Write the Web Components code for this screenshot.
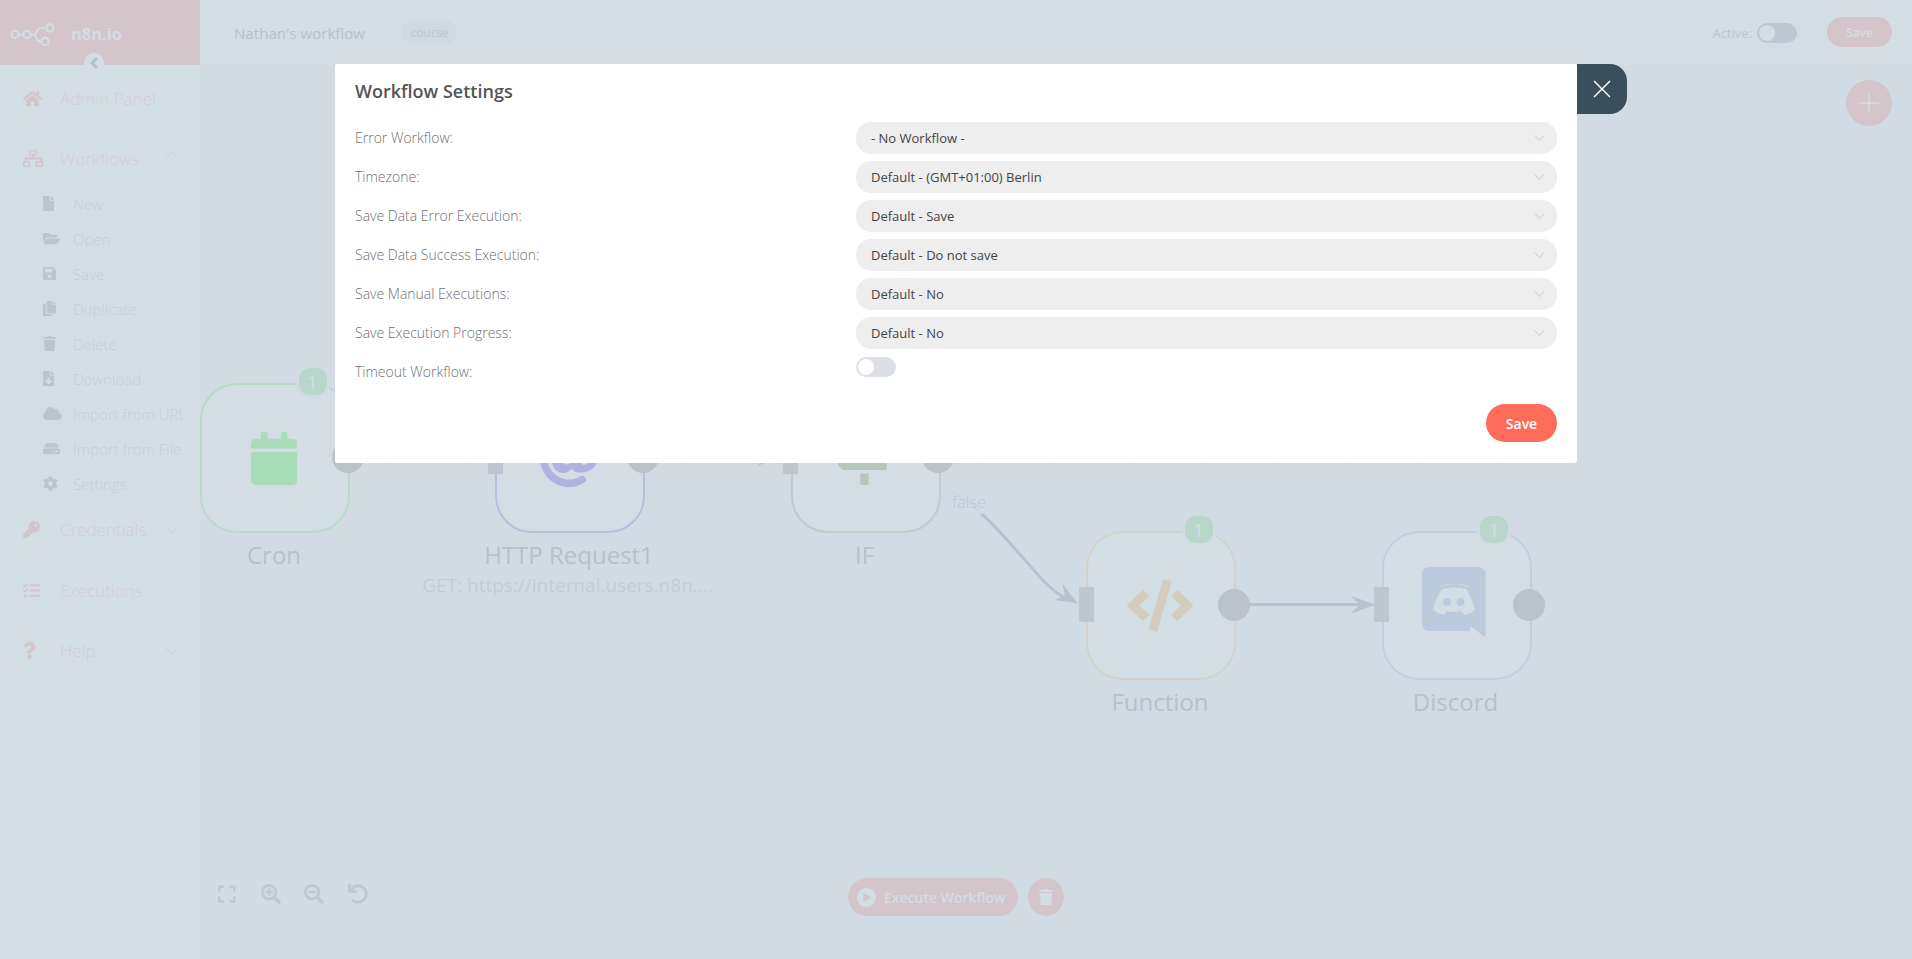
<!DOCTYPE html>
<html lang="en">
<head>
<meta charset="utf-8">
<title>n8n.io - Workflow Settings</title>
<style>
  html, body { margin: 0; height: 100%; overflow: hidden; }
  body { font-family: "Open Sans", "Liberation Sans", sans-serif; background: #fff; }
</style>
</head>
<body>
<n8n-app>
  <n8n-sidebar slot="sidebar">
    <n8n-menu-item icon="home" label="Admin Panel"></n8n-menu-item>
    <n8n-menu-item icon="sitemap" label="Workflows" chevron="up"></n8n-menu-item>
    <n8n-sub-menu>
      <n8n-menu-item sub icon="file" label="New"></n8n-menu-item>
      <n8n-menu-item sub icon="folder-open" label="Open"></n8n-menu-item>
      <n8n-menu-item sub icon="save" label="Save"></n8n-menu-item>
      <n8n-menu-item sub icon="copy" label="Duplicate"></n8n-menu-item>
      <n8n-menu-item sub icon="trash" label="Delete"></n8n-menu-item>
      <n8n-menu-item sub icon="file-download" label="Download"></n8n-menu-item>
      <n8n-menu-item sub icon="cloud" label="Import from URL"></n8n-menu-item>
      <n8n-menu-item sub icon="hdd" label="Import from File"></n8n-menu-item>
      <n8n-menu-item sub icon="cog" label="Settings"></n8n-menu-item>
    </n8n-sub-menu>
    <n8n-menu-item icon="key" label="Credentials" chevron="down"></n8n-menu-item>
    <n8n-menu-item icon="tasks" label="Executions"></n8n-menu-item>
    <n8n-menu-item icon="question" label="Help" chevron="down"></n8n-menu-item>
  </n8n-sidebar>
  <n8n-topbar slot="topbar" name="Nathan's workflow" tag="course"></n8n-topbar>
  <n8n-canvas slot="canvas">
    <n8n-node x="0" y="318" h="150" label="Cron" color="#00ff00" badge="1" icon="calendar" icon-size="53"></n8n-node>
    <n8n-node x="295" y="318" h="150" label="HTTP Request1" sub="GET: https://internal.users.n8n...." color="#2200dd" icon="at" icon-size="60" input></n8n-node>
    <n8n-node x="590.5" y="318" h="150" label="IF" color="#408000" icon="map-signs" icon-size="53" input></n8n-node>
    <n8n-node x="886" y="466" h="149" label="Function" color="#ff9922" badge="1" icon="code" icon-size="53" input></n8n-node>
    <n8n-node x="1181.5" y="466" h="149" label="Discord" color="#7289da" badge="1" icon="discord" input></n8n-node>
  </n8n-canvas>
  <n8n-settings-dialog slot="overlay" heading="Workflow Settings">
    <n8n-select-row label="Error Workflow:" value="- No Workflow -"></n8n-select-row>
    <n8n-select-row label="Timezone:" value="Default - (GMT+01:00) Berlin"></n8n-select-row>
    <n8n-select-row label="Save Data Error Execution:" value="Default - Save"></n8n-select-row>
    <n8n-select-row label="Save Data Success Execution:" value="Default - Do not save"></n8n-select-row>
    <n8n-select-row label="Save Manual Executions:" value="Default - No"></n8n-select-row>
    <n8n-select-row label="Save Execution Progress:" value="Default - No"></n8n-select-row>
    <n8n-select-row label="Timeout Workflow:" toggle></n8n-select-row>
  </n8n-settings-dialog>
</n8n-app>

<script>
// FontAwesome 5 solid shapes, [width, path] on a 512 high box
const ICONS = {
  home: [576, 'M280.37 148.26L96 300.11V464a16 16 0 0 0 16 16l112.06-.29a16 16 0 0 0 15.92-16V368a16 16 0 0 1 16-16h64a16 16 0 0 1 16 16v95.64a16 16 0 0 0 16 16.05L464 480a16 16 0 0 0 16-16V300L295.67 148.26a12.19 12.19 0 0 0-15.3 0zM571.6 251.47L488 182.56V44.05a12 12 0 0 0-12-12h-56a12 12 0 0 0-12 12v72.61L318.47 43a48 48 0 0 0-61 0L4.34 251.47a12 12 0 0 0-1.6 16.9l25.5 31A12 12 0 0 0 45.15 301l235.22-193.74a12.19 12.19 0 0 1 15.3 0L530.9 301a12 12 0 0 0 16.9-1.6l25.5-31a12 12 0 0 0-1.7-16.93z'],
  sitemap: [600, 'M210 0h180a24 24 0 0 1 24 24v116a24 24 0 0 1-24 24h-60v64h210a40 40 0 0 1 40 40v64h20a24 24 0 0 1 24 24v132a24 24 0 0 1-24 24H400a24 24 0 0 1-24-24V356a24 24 0 0 1 24-24h116v-48H84v48h116a24 24 0 0 1 24 24v132a24 24 0 0 1-24 24H24a24 24 0 0 1-24-24V356a24 24 0 0 1 24-24h16v-64a40 40 0 0 1 40-40h190v-64h-60a24 24 0 0 1-24-24V24a24 24 0 0 1 24-24zm18 40v84h144V40zM48 376v92h128v-92zm376 0v92h128v-92z'],
  file: [384, 'M224 136V0H24C10.7 0 0 10.7 0 24v464c0 13.3 10.7 24 24 24h336c13.3 0 24-10.7 24-24V160H248c-13.2 0-24-10.8-24-24zm160-14.1v6.1H256V0h6.1c6.4 0 12.5 2.5 17 7l97.9 98c4.5 4.5 7 10.6 7 16.9z'],
  'folder-open': [576, 'M572.694 292.093L500.27 416.248A63.997 63.997 0 0 1 444.989 448H45.025c-18.523 0-30.064-20.093-20.731-36.093l72.424-124.155A64 64 0 0 1 152 256h399.964c18.523 0 30.064 20.093 20.73 36.093zM152 224h328v-48c0-26.51-21.49-48-48-48H272l-64-64H48C21.49 64 0 85.49 0 112v278.046l69.077-118.418C86.214 242.25 117.989 224 152 224z'],
  save: [448, 'M433.941 129.941l-83.882-83.882A48 48 0 0 0 316.118 32H48C21.49 32 0 53.49 0 80v352c0 26.51 21.49 48 48 48h352c26.51 0 48-21.49 48-48V163.882a48 48 0 0 0-14.059-33.941zM224 416c-35.346 0-64-28.654-64-64 0-35.346 28.654-64 64-64s64 28.654 64 64c0 35.346-28.654 64-64 64zm96-304.52V212c0 6.627-5.373 12-12 12H76c-6.627 0-12-5.373-12-12V108c0-6.627 5.373-12 12-12h228.52c3.183 0 6.235 1.264 8.485 3.515l3.48 3.48A11.996 11.996 0 0 1 320 111.48z'],
  copy: [448, 'M320 448v40c0 13.255-10.745 24-24 24H24c-13.255 0-24-10.745-24-24V120c0-13.255 10.745-24 24-24h72v296c0 30.879 25.121 56 56 56h168zm0-344V0H152c-13.255 0-24 10.745-24 24v368c0 13.255 10.745 24 24 24h272c13.255 0 24-10.745 24-24V128H344c-13.2 0-24-10.8-24-24zm120.971-31.029L375.029 7.029A24 24 0 0 0 358.059 0H352v96h96v-6.059a24 24 0 0 0-7.029-16.97z'],
  trash: [448, 'M432 32H312l-9.4-18.7A24 24 0 0 0 281.1 0H166.8a23.72 23.72 0 0 0-21.4 13.3L136 32H16A16 16 0 0 0 0 48v32a16 16 0 0 0 16 16h416a16 16 0 0 0 16-16V48a16 16 0 0 0-16-16zM53.2 467a48 48 0 0 0 47.9 45h245.8a48 48 0 0 0 47.9-45L416 128H32z'],
  'file-download': [384, 'M224 136V0H24C10.7 0 0 10.7 0 24v464c0 13.3 10.7 24 24 24h336c13.3 0 24-10.7 24-24V160H248c-13.2 0-24-10.8-24-24zm76.45 211.36l-96.42 95.7c-6.65 6.61-17.39 6.61-24.04 0l-96.42-95.7C73.42 337.29 80.54 320 94.82 320H160v-80c0-8.84 7.16-16 16-16h32c8.84 0 16 7.16 16 16v80h65.18c14.28 0 21.4 17.29 11.27 27.36zM377 105L279.1 7c-4.5-4.5-10.6-7-17-7H256v128h128v-6.1c0-6.3-2.5-12.4-7-16.9z'],
  cloud: [640, 'M537.6 226.6c4.1-10.7 6.4-22.4 6.4-34.6 0-53-43-96-96-96-19.7 0-38.1 6-53.3 16.2C367 64.2 315.3 32 256 32c-88.4 0-160 71.6-160 160 0 2.7.1 5.4.2 8.1C40.2 219.8 0 273.2 0 336c0 79.5 64.5 144 144 144h368c70.7 0 128-57.3 128-128 0-61.9-44-113.6-102.4-125.4z'],
  hdd: [576, 'M576 304v96c0 26.51-21.49 48-48 48H48c-26.51 0-48-21.49-48-48v-96c0-26.51 21.49-48 48-48h480c26.51 0 48 21.49 48 48zm-48-80a79.557 79.557 0 0 1 30.777 6.165L462.25 85.374A48.003 48.003 0 0 0 422.311 64H153.689a48 48 0 0 0-39.938 21.374L17.223 230.165A79.557 79.557 0 0 1 48 224h480zm-48 96c-17.673 0-32 14.327-32 32s14.327 32 32 32 32-14.327 32-32-14.327-32-32-32zm-96 0c-17.673 0-32 14.327-32 32s14.327 32 32 32 32-14.327 32-32-14.327-32-32-32z'],
  cog: [512, 'M487.4 315.7l-42.6-24.6c4.3-23.2 4.3-47 0-70.2l42.6-24.6c4.9-2.8 7.1-8.6 5.5-14-11.1-35.6-30-67.8-54.7-94.6-3.8-4.1-10-5.1-14.8-2.3L380.8 110c-17.9-15.4-38.5-27.3-60.8-35.1V25.8c0-5.6-3.9-10.5-9.4-11.7-36.7-8.2-74.3-7.8-109.2 0-5.5 1.2-9.4 6.1-9.4 11.7V75c-22.2 7.9-42.8 19.8-60.8 35.1L88.7 85.5c-4.9-2.8-11-1.9-14.8 2.3-24.7 26.7-43.6 58.9-54.7 94.6-1.7 5.4.6 11.2 5.5 14L67.3 221c-4.3 23.2-4.3 47 0 70.2l-42.6 24.6c-4.9 2.8-7.1 8.6-5.5 14 11.1 35.6 30 67.8 54.7 94.6 3.8 4.1 10 5.1 14.8 2.3l42.6-24.6c17.9 15.4 38.5 27.3 60.8 35.1v49.2c0 5.6 3.9 10.5 9.4 11.7 36.7 8.2 74.3 7.8 109.2 0 5.5-1.2 9.4-6.1 9.4-11.7v-49.2c22.2-7.9 42.8-19.8 60.8-35.1l42.6 24.6c4.9 2.8 11 1.9 14.8-2.3 24.7-26.7 43.6-58.9 54.7-94.6 1.5-5.5-.7-11.3-5.6-14.1zM256 336c-44.1 0-80-35.9-80-80s35.9-80 80-80 80 35.9 80 80-35.9 80-80 80z'],
  key: [512, 'M512 176.001C512 273.203 433.202 352 336 352c-11.22 0-22.19-1.062-32.827-3.069l-24.012 27.014A23.999 23.999 0 0 1 261.223 384H224v40c0 13.255-10.745 24-24 24h-40v40c0 13.255-10.745 24-24 24H24c-13.255 0-24-10.745-24-24v-78.059c0-6.365 2.529-12.47 7.029-16.971l161.802-161.802C163.108 213.814 160 195.271 160 176 160 78.798 238.797.001 335.999 0 433.488-.001 512 78.511 512 176.001zM336 128c0 26.51 21.49 48 48 48s48-21.49 48-48-21.49-48-48-48-48 21.49-48 48z'],
  tasks: [512, 'M139.61 35.5a12 12 0 0 0-17 0L58.93 98.81l-22.7-22.12a12 12 0 0 0-17 0L3.53 92.41a12 12 0 0 0 0 17l47.59 47.4a12.78 12.78 0 0 0 17.61 0l15.59-15.62L156.52 69a12.09 12.09 0 0 0 .09-17zm0 159.19a12 12 0 0 0-17 0l-63.68 63.72-22.7-22.1a12 12 0 0 0-17 0L3.53 252a12 12 0 0 0 0 17L51 316.5a12.77 12.77 0 0 0 17.6 0l15.7-15.69 72.2-72.22a12 12 0 0 0 .09-16.9zM64 368c-26.49 0-48.59 21.5-48.59 48S37.53 464 64 464a48 48 0 0 0 0-96zm432 16H208a16 16 0 0 0-16 16v32a16 16 0 0 0 16 16h288a16 16 0 0 0 16-16v-32a16 16 0 0 0-16-16zm0-320H208a16 16 0 0 0-16 16v32a16 16 0 0 0 16 16h288a16 16 0 0 0 16-16V80a16 16 0 0 0-16-16zm0 160H208a16 16 0 0 0-16 16v32a16 16 0 0 0 16 16h288a16 16 0 0 0 16-16v-32a16 16 0 0 0-16-16z'],
  question: [384, 'M202.021 0C122.202 0 70.503 32.703 29.914 91.026c-7.363 10.58-5.093 25.086 5.178 32.874l43.138 32.709c10.373 7.865 25.132 6.026 33.253-4.148 25.049-31.381 43.63-49.449 82.757-49.449 30.764 0 68.816 19.799 68.816 49.631 0 22.552-18.617 34.134-48.993 51.164-35.423 19.86-82.299 44.576-82.299 106.405V320c0 13.255 10.745 24 24 24h72.471c13.255 0 24-10.745 24-24v-5.773c0-42.86 125.268-44.645 125.268-160.627C377.504 66.256 286.902 0 202.021 0zM192 373.459c-38.196 0-69.271 31.075-69.271 69.271 0 38.195 31.075 69.27 69.271 69.27s69.271-31.075 69.271-69.271-31.075-69.27-69.271-69.27z'],
  calendar: [448, 'M12 192h424c6.6 0 12 5.4 12 12v260c0 26.5-21.5 48-48 48H48c-26.5 0-48-21.5-48-48V204c0-6.6 5.4-12 12-12zm436-44v-36c0-26.5-21.5-48-48-48h-48V12c0-6.6-5.4-12-12-12h-40c-6.6 0-12 5.4-12 12v52H160V12c0-6.6-5.4-12-12-12h-40c-6.6 0-12 5.4-12 12v52H48C21.5 64 0 85.5 0 112v36c0 6.6 5.4 12 12 12h424c6.6 0 12-5.4 12-12z'],
  at: [512, 'M256 8C118.941 8 8 118.919 8 256c0 137.059 110.919 248 248 248 48.154 0 95.342-14.14 135.408-40.223 12.005-7.815 14.625-24.288 5.552-35.372l-10.177-12.433c-7.671-9.371-21.179-11.667-31.373-5.129C325.92 429.757 291.314 440 256 440c-101.458 0-184-82.542-184-184S154.542 72 256 72c100.139 0 184 57.619 184 160 0 38.786-21.093 79.742-58.17 83.693-17.349-.454-16.91-12.857-13.476-30.024l23.433-121.11C394.653 149.75 383.308 136 368.225 136h-44.981a13.518 13.518 0 0 0-13.432 11.993l-.01.092c-14.697-17.901-40.448-21.775-59.971-21.775-74.58 0-137.831 62.234-137.831 151.46 0 65.303 36.785 105.87 96 105.87 26.984 0 57.369-15.637 74.991-38.333 9.522 34.104 40.613 34.103 70.71 34.103C462.609 379.41 504 307.798 504 232 504 95.653 394.023 8 256 8zm-21.68 304.43c-22.249 0-36.07-15.623-36.07-40.771 0-44.993 30.779-72.729 58.63-72.729 22.292 0 35.601 15.241 35.601 40.77 0 45.061-33.875 72.73-58.161 72.73z'],
  'map-signs': [512, 'M232 0h48a16 16 0 0 1 16 16v16h160a16 16 0 0 1 11 4l41 40a12 12 0 0 1 0 17l-41 40a16 16 0 0 1-11 4H56a16 16 0 0 1-16-16V48a16 16 0 0 1 16-16h160V16a16 16 0 0 1 16-16zM216 208h80v48h160a16 16 0 0 1 16 16v80a16 16 0 0 1-16 16H56a16 16 0 0 1-11-4L4 324a12 12 0 0 1 0-17l41-40a16 16 0 0 1 11-4h160zM216 400h80v96a16 16 0 0 1-16 16h-48a16 16 0 0 1-16-16z'],
  code: [640, 'M278.9 511.5l-61-17.7c-6.4-1.8-10-8.5-8.2-14.9L346.2 8.7c1.8-6.4 8.5-10 14.9-8.2l61 17.7c6.4 1.8 10 8.5 8.2 14.9L293.8 503.3c-1.9 6.4-8.5 10.1-14.9 8.2zm-114-112.2l43.5-46.4c4.6-4.9 4.3-12.7-.8-17.2L117 256l90.6-79.7c5.1-4.5 5.5-12.3.8-17.2l-43.5-46.4c-4.5-4.8-12.1-5.1-17-.5L3.8 247.2c-5.1 4.7-5.1 12.8 0 17.5l144.1 135.1c4.9 4.6 12.5 4.4 17-.5zm327.2.6l144.1-135.1c5.1-4.7 5.1-12.8 0-17.5L492.1 112.1c-4.8-4.5-12.4-4.3-17 .5L431.6 159c-4.6 4.9-4.3 12.7.8 17.2L523 256l-90.6 79.7c-5.1 4.5-5.5 12.3-.8 17.2l43.5 46.4c4.5 4.9 12.1 5.1 17 .6z'],
  'search-plus': [512, 'M304 192v32c0 6.6-5.4 12-12 12h-56v56c0 6.6-5.4 12-12 12h-32c-6.6 0-12-5.4-12-12v-56h-56c-6.6 0-12-5.4-12-12v-32c0-6.6 5.4-12 12-12h56v-56c0-6.6 5.4-12 12-12h32c6.6 0 12 5.4 12 12v56h56c6.6 0 12 5.4 12 12zm201 284.7L476.7 505c-9.4 9.4-24.6 9.4-33.9 0L343 405.3c-4.5-4.5-7-10.6-7-17V372c-35.3 27.6-79.7 44-128 44C93.1 416 0 322.9 0 208S93.1 0 208 0s208 93.1 208 208c0 48.3-16.4 92.7-44 128h16.3c6.4 0 12.5 2.5 17 7l99.7 99.7c9.3 9.4 9.3 24.6 0 34zM344 208c0-75.2-60.8-136-136-136S72 132.8 72 208s60.8 136 136 136 136-60.8 136-136z'],
  'search-minus': [512, 'M304 192v32c0 6.6-5.4 12-12 12H124c-6.6 0-12-5.4-12-12v-32c0-6.6 5.4-12 12-12h168c6.6 0 12 5.4 12 12zm201 284.7L476.7 505c-9.4 9.4-24.6 9.4-33.9 0L343 405.3c-4.5-4.5-7-10.6-7-17V372c-35.3 27.6-79.7 44-128 44C93.1 416 0 322.9 0 208S93.1 0 208 0s208 93.1 208 208c0 48.3-16.4 92.7-44 128h16.3c6.4 0 12.5 2.5 17 7l99.7 99.7c9.3 9.4 9.3 24.6 0 34zM344 208c0-75.2-60.8-136-136-136S72 132.8 72 208s60.8 136 136 136 136-60.8 136-136z'],
  undo: [512, 'M212.333 224.333H12c-6.627 0-12-5.373-12-12V12C0 5.373 5.373 0 12 0h48c6.627 0 12 5.373 12 12v78.112C117.773 39.279 184.26 7.47 258.175 8.007c136.906.994 246.448 111.623 246.157 248.532C504.041 393.258 393.12 504 256.333 504c-64.089 0-122.496-24.313-166.51-64.215-5.099-4.622-5.334-12.554-.467-17.42l33.967-33.967c4.474-4.474 11.662-4.717 16.401-.525C170.76 415.336 211.58 432 256.333 432c97.268 0 176-78.716 176-176 0-97.267-78.716-176-176-176-58.496 0-110.28 28.476-142.274 72.333h98.274c6.627 0 12 5.373 12 12v48c0 6.627-5.373 12-12 12z'],
  expand: [448, 'M0 180V56c0-13.3 10.7-24 24-24h124c6.6 0 12 5.4 12 12v40c0 6.6-5.4 12-12 12H64v84c0 6.6-5.4 12-12 12H12c-6.6 0-12-5.4-12-12zM288 44v40c0 6.6 5.4 12 12 12h84v84c0 6.6 5.4 12 12 12h40c6.6 0 12-5.4 12-12V56c0-13.3-10.7-24-24-24H300c-6.6 0-12 5.4-12 12zm148 276h-40c-6.6 0-12 5.4-12 12v84h-84c-6.6 0-12 5.4-12 12v40c0 6.6 5.4 12 12 12h124c13.3 0 24-10.7 24-24V332c0-6.6-5.4-12-12-12zM160 468v-40c0-6.6-5.4-12-12-12H64v-84c0-6.6-5.4-12-12-12H12c-6.6 0-12 5.4-12 12v124c0 13.3 10.7 24 24 24h124c6.6 0 12-5.4 12-12z']
};

function faSvg(name, size) {
  const [w, d] = ICONS[name];
  return `<svg width="${w / 512 * size}" height="${size}" viewBox="0 0 ${w} 512" fill="currentColor" style="display:block"><path d="${d}"/></svg>`;
}

function chevron(dir, color) {
  const pts = dir === 'up' ? '1,8 6.5,2 12,8' : '1,2 6.5,8 12,2';
  return `<svg width="13" height="10" viewBox="0 0 13 10" fill="none" stroke="${color}" stroke-width="1" style="display:block"><polyline points="${pts}"/></svg>`;
}

class N8nApp extends HTMLElement {
  constructor() {
    super();
    this.attachShadow({ mode: 'open' });
    this.shadowRoot.innerHTML = `
      <style>
        :host { display: grid; grid-template-columns: 200px 1fr; grid-template-rows: 65px 1fr; width: 1912px; height: 959px; position: relative; overflow: hidden; }
        .side { grid-row: 1 / 3; display: block; }
        .overlay { position: absolute; inset: 0; background: rgba(202, 214, 223, .835); display: flex; justify-content: center; align-items: flex-start; z-index: 10; }
      </style>
      <div class="side"><slot name="sidebar"></slot></div>
      <slot name="topbar"></slot>
      <slot name="canvas"></slot>
      <div class="overlay"><slot name="overlay"></slot></div>
    `;
  }
}

class N8nSidebar extends HTMLElement {
  constructor() {
    super();
    this.attachShadow({ mode: 'open' });
    this.shadowRoot.innerHTML = `
      <style>
        :host { display: block; height: 100%; background: #fff; position: relative; z-index: 2; }
        .logo { height: 65px; background: #ff6d5a; display: flex; align-items: center; gap: 15px; padding: 3px 0 0 9px; color: #fff; font-weight: 700; font-size: 16.5px; box-sizing: border-box; }
        .logo span { margin-top: -2px; }
        .collapse { position: absolute; left: 84px; top: 53px; width: 20px; height: 20px; border-radius: 50%; background: #fff; display: flex; align-items: center; justify-content: center; }
        .menu { padding-top: 4.5px; }
      </style>
      <div class="logo">
        <svg width="47" height="34" viewBox="0 0 47 34" fill="none" stroke="#fff" stroke-width="2.2" style="display:block">
          <circle cx="6" cy="17.5" r="3.6"/><circle cx="18" cy="17.5" r="3.6"/><circle cx="41" cy="11" r="3.6"/><circle cx="36" cy="24.5" r="3.6"/>
          <path d="M9.600 17.500h4.800M21.600 17.500h3c4 0 3-6.500 7-6.500h5.400M24.600 17.500c3 0 2 7 7 7h.8"/>
        </svg>
        <span>n8n.io</span>
      </div>
      <div class="collapse"><svg width="9" height="12" viewBox="0 0 9 12" fill="none" stroke="#555" stroke-width="3"><polyline points="7,1 2,6 7,11"/></svg></div>
      <div class="menu"><slot></slot></div>
    `;
  }
}

class N8nSubMenu extends HTMLElement {
  constructor() {
    super();
    this.attachShadow({ mode: 'open' });
    this.shadowRoot.innerHTML = `
      <style>:host { display: block; margin-top: -3.500px; margin-bottom: 0; }</style>
      <slot></slot>
    `;
  }
}

class N8nMenuItem extends HTMLElement {
  constructor() {
    super();
    this.attachShadow({ mode: 'open' });
  }

  connectedCallback() {
    const sub = this.hasAttribute('sub');
    const icon = this.getAttribute('icon');
    const label = this.getAttribute('label');
    const dir = this.getAttribute('chevron');
    this.shadowRoot.innerHTML = `
      <style>
        :host { display: flex; align-items: center; position: relative; box-sizing: border-box; font-weight: 300;
          height: ${sub ? 35 : 57}px; margin-bottom: ${sub ? 0 : 3.2}px;
          padding-left: ${sub ? 43 : 23}px; font-size: ${sub ? 15 : 17}px; color: ${sub ? '#707078' : '#ff6d5a'}; white-space: nowrap; }
        .icon { width: ${sub ? 30 : 37}px; flex: none; }
        span { color: ${sub ? '#999' : '#ff9191'}; }
        .chev { position: absolute; left: 165px; top: ${dir === 'up' ? 20 : 24}px; }
      </style>
      <div class="icon">${faSvg(icon, sub ? 15 : 17)}</div>
      <span>${label}</span>
      ${dir ? `<div class="chev">${chevron(dir, '#ff9191')}</div>` : ''}
    `;
  }
}

class N8nSwitch extends HTMLElement {
  constructor() {
    super();
    this.attachShadow({ mode: 'open' });
    this.shadowRoot.innerHTML = `
      <style>
        :host { display: block; width: 40px; height: 20px; border-radius: 10px; background: var(--switch-bg, #dcdfe6); padding: 2px; box-sizing: border-box; }
        div { width: 16px; height: 16px; border-radius: 50%; background: #fff; }
      </style>
      <div></div>
    `;
  }
}

class N8nTopbar extends HTMLElement {
  constructor() {
    super();
    this.attachShadow({ mode: 'open' });
  }

  connectedCallback() {
    this.shadowRoot.innerHTML = `
      <style>
        :host { display: flex; align-items: center; background: #fff; padding: 0 20px 0 34px; height: 65px; box-sizing: border-box; color: #555; }
        .name { font-size: 15.1px; }
        .tag { margin-left: 37px; width: 55px; height: 24px; border-radius: 12px; background: #dde3ea; color: #777; font-size: 12px; display: flex; align-items: center; justify-content: center; margin-top: -1px; }
        .right { margin-left: auto; display: flex; align-items: center; }
        .active { font-size: 13px; font-weight: 400; color: #707070; margin-right: 5px; }
        n8n-switch { --switch-bg: #738591; }
        .save { margin-left: 30px; width: 65px; height: 30px; border-radius: 15px; background: #ff6d5a; color: #fff; font-size: 12px; font-weight: 600; display: flex; align-items: center; justify-content: center; margin-top: -1px; }
      </style>
      <span class="name">${this.getAttribute('name')}</span>
      <span class="tag">${this.getAttribute('tag')}</span>
      <div class="right">
        <span class="active">Active:</span>
        <n8n-switch></n8n-switch>
        <div class="save">Save</div>
      </div>
    `;
  }
}

class N8nNode extends HTMLElement {
  constructor() {
    super();
    this.attachShadow({ mode: 'open' });
  }

  icon() {
    const name = this.getAttribute('icon');
    if (name === 'discord') {
      return `<svg width="63.500" height="71" viewBox="0 0 63.500 71" style="display:block;margin:-7px 0 0 -3px">
        <path fill="var(--c)" d="M7 0H56.500a7 7 0 0 1 7 7V70.500L48 59V64H7a7 7 0 0 1-7-7V7a7 7 0 0 1 7-7z"/>
        <path fill="#fff" d="M20 22Q32 19 44 22Q50 30 53 43Q48 47 42.500 48L39 44Q32 46 25 44L22 48Q16 47 11 43Q14 30 20 22z"/>
        <path fill="none" stroke="#fff" d="M18 20Q22 17.500 27 17.500M46 20Q42 17.500 37 17.500"/>
        <circle cx="25" cy="35" r="4" fill="var(--c)"/><circle cx="38.500" cy="35" r="4" fill="var(--c)"/>
      </svg>`;
    }
    return faSvg(name, Number(this.getAttribute('icon-size')));
  }

  connectedCallback() {
    const badge = this.getAttribute('badge');
    const sub = this.getAttribute('sub');
    this.shadowRoot.innerHTML = `
      <style>
        :host { position: absolute; left: ${this.getAttribute('x')}px; top: ${this.getAttribute('y')}px; width: 150px; height: ${this.getAttribute('h')}px; --c: ${this.getAttribute('color')}; }
        .box { width: 100%; height: 100%; box-sizing: border-box; background: #fff; border: 2px solid color-mix(in srgb, var(--c) 72%, white); border-radius: 37px; display: flex; align-items: center; justify-content: center; color: var(--c); padding-right: 2px; }
        .badge { position: absolute; left: 98.500px; top: -15px; width: 28px; height: 27px; border-radius: 11px; background: #5fd45a; color: #fff; font-size: 18px; display: flex; align-items: center; justify-content: center; box-shadow: 0 0 0 3px #f4f4fe; }
        .out { position: absolute; left: 131.500px; top: 57.500px; width: 32px; height: 32px; border-radius: 50%; background: #5b6161; }
        .in { position: absolute; left: -7.500px; top: 56px; width: 15px; height: 35px; background: #777d80; }
        .label { position: absolute; top: 100%; left: -77px; right: -75px; text-align: center; color: #555; font-size: 24px; line-height: 33px; margin-top: 5px; white-space: nowrap; }
        .sub { position: absolute; top: 100%; left: -80px; right: -75px; text-align: center; color: #999; font-size: 19px; line-height: 24px; margin-top: 40px; font-weight: 400; white-space: nowrap; }
      </style>
      <div class="box">${this.icon()}</div>
      ${badge ? `<div class="badge">${badge}</div>` : ''}
      ${this.hasAttribute('input') ? '<div class="in"></div>' : ''}
      <div class="out"></div>
      <div class="label">${this.getAttribute('label')}</div>
      ${sub ? `<div class="sub">${sub}</div>` : ''}
    `;
  }
}

class N8nCanvas extends HTMLElement {
  constructor() {
    super();
    this.attachShadow({ mode: 'open' });
    this.shadowRoot.innerHTML = `
      <style>
        :host { display: block; position: relative; overflow: hidden; background-color: #f2f2fe; }
        svg.wires { position: absolute; left: 0; top: 0; }
        .false { position: absolute; left: 747px; top: 424px; padding: 0 1px 0 5px; font-size: 16.500px; line-height: 25px; font-weight: 300; color: #777; background: rgba(242, 242, 254, .85); }
        .plus { position: absolute; left: 1646px; top: 15px; width: 46px; height: 46px; border-radius: 50%; background: #ff6d5a; display: flex; align-items: center; justify-content: center; }
        .tools { position: absolute; left: 7px; top: 809px; display: flex; gap: 3.670px; }
        .tool { width: 40px; height: 40px; display: flex; align-items: center; justify-content: center; color: #888; background: rgba(255, 255, 255, .25); }
        .run { position: absolute; left: 648px; top: 813px; display: flex; gap: 10px; }
        .exec { width: 170px; height: 38px; border-radius: 19px; background: #ff6d5a; color: #fff; display: flex; align-items: center; gap: 8px; padding-left: 9px; box-sizing: border-box; font-size: 14px; font-weight: 600; white-space: nowrap; }
        .trash { width: 36px; height: 38px; border-radius: 50%; background: #ff6d5a; color: #fff; display: flex; align-items: center; justify-content: center; }
      </style>
      <svg class="wires" width="1712" height="894" viewBox="200 65 1712 894" fill="none" stroke="#4f6070">
        <defs>
          <pattern id="grid" x="242.700" y="129.300" width="73.750" height="73.750" patternUnits="userSpaceOnUse">
            <path d="M.5 0V73.750M0 .5H73.750" stroke="#e9eaf5" stroke-width="1"/>
          </pattern>
        </defs>
        <rect x="200" y="65" width="1712" height="894" fill="url(#grid)" stroke="none"/>
        <path stroke-width="3" d="M1249 604.500H1360"/>
        <path fill="#4f6070" stroke="none" d="M1376 604.500L1350.500 596L1360 604.500L1350.500 614z"/>
        <path stroke-width="3" d="M950 490C985 510 1015 550 1040 577C1052 590 1062 597 1068 599"/>
        <path fill="#4f6070" stroke="none" d="M1078 603.500L1062.500 584L1065 595L1055 600z"/>
        <path stroke-width="3" d="M658 457H770"/>
        <path fill="#4f6070" stroke="none" d="M783 457L757 466L766 457L757 448z"/>
      </svg>
      <slot></slot>
      <div class="false">false</div>
      <div class="plus"><svg width="22" height="22" viewBox="0 0 22 22" stroke="#fff" stroke-width="1.300"><path d="M11 1V21M1 11H21"/></svg></div>
      <div class="tools">
        <div class="tool">${faSvg('expand', 20)}</div>
        <div class="tool">${faSvg('search-plus', 20)}</div>
        <div class="tool">${faSvg('search-minus', 20)}</div>
        <div class="tool">${faSvg('undo', 20)}</div>
      </div>
      <div class="run">
        <div class="exec">
          <svg width="19" height="19" viewBox="0 0 19 19" style="display:block"><circle cx="9.500" cy="9.500" r="9.500" fill="#fff"/><path fill="#ff6d5a" d="M6.500 4.500L14.500 9.500L6.500 14.500z"/></svg>
          <span>Execute Workflow</span>
        </div>
        <div class="trash">${faSvg('trash', 16)}</div>
      </div>
    `;
  }
}

class N8nSelectRow extends HTMLElement {
  constructor() {
    super();
    this.attachShadow({ mode: 'open' });
  }

  connectedCallback() {
    const toggle = this.hasAttribute('toggle');
    this.shadowRoot.innerHTML = `
      <style>
        :host { display: grid; grid-template-columns: 501px 701px; align-items: center; height: 32px; margin-bottom: 7px; }
        .label { font-size: 14px; font-weight: 300; color: #707070; white-space: nowrap; margin-top: -1px; }
        .select { height: 32px; border-radius: 15px; background: #eee; display: flex; align-items: center; justify-content: space-between; padding: 0 12px 0 15px; font-size: 13px; color: #444; }
        .select svg { width: 11px; }
        n8n-switch { margin-top: -10px; }
      </style>
      <span class="label">${this.getAttribute('label')}</span>
      ${toggle ? '<n8n-switch></n8n-switch>' : `<div class="select"><span>${this.getAttribute('value')}</span>${chevron('down', '#c0c4cc')}</div>`}
    `;
  }
}

class N8nSettingsDialog extends HTMLElement {
  constructor() {
    super();
    this.attachShadow({ mode: 'open' });
  }

  connectedCallback() {
    this.shadowRoot.innerHTML = `
      <style>
        :host { display: block; position: relative; box-sizing: border-box; width: 1242px; height: 399px; margin-top: 64px; background: #fff; border-radius: 2px; padding: 14px 20px 0 20px; }
        h2 { margin: 0 0 18px; font-size: 18px; line-height: 26px; font-weight: 600; color: #555; }
        .foot { display: flex; justify-content: flex-end; margin-top: 16.300px; }
        .save { width: 71px; height: 38px; border-radius: 19px; background: #ff6d5a; color: #fff; font-size: 14px; font-weight: 600; display: flex; align-items: center; justify-content: center; }
        .close { position: absolute; left: 100%; top: 0; width: 50px; height: 50px; background: #3a4f5e; border-radius: 0 17px 17px 0; display: flex; align-items: center; justify-content: center; }
      </style>
      <h2>${this.getAttribute('heading')}</h2>
      <slot></slot>
      <div class="foot"><div class="save">Save</div></div>
      <div class="close"><svg width="18" height="18" viewBox="0 0 18 18" stroke="#fff" stroke-width="1.500"><path d="M1 1L17 17M17 1L1 17"/></svg></div>
    `;
  }
}

customElements.define('n8n-switch', N8nSwitch);
customElements.define('n8n-menu-item', N8nMenuItem);
customElements.define('n8n-sub-menu', N8nSubMenu);
customElements.define('n8n-sidebar', N8nSidebar);
customElements.define('n8n-topbar', N8nTopbar);
customElements.define('n8n-node', N8nNode);
customElements.define('n8n-canvas', N8nCanvas);
customElements.define('n8n-select-row', N8nSelectRow);
customElements.define('n8n-settings-dialog', N8nSettingsDialog);
customElements.define('n8n-app', N8nApp);
</script>
</body>
</html>
